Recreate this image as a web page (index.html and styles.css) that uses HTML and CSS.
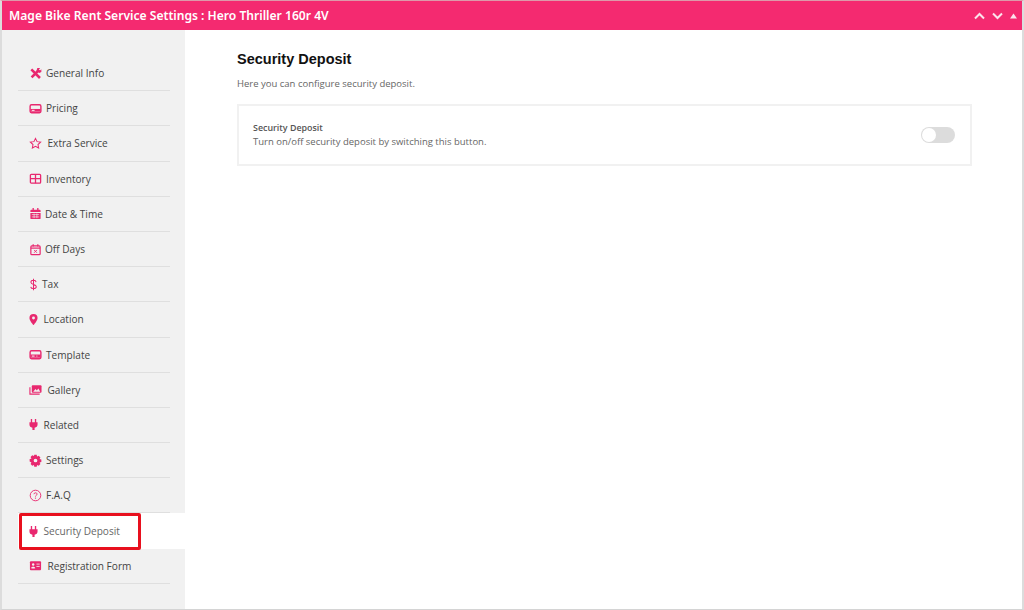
FILE: index.html
```html
<!DOCTYPE html>
<html lang="en">
<head>
  <meta charset="UTF-8" />
  <meta name="viewport" content="width=device-width, initial-scale=1.0" />
  <title>Mage Bike Rent Service Settings</title>
  <link rel="stylesheet" href="styles.css">
</head>
<body>
  <div class="panel">
    <header class="panel-head">
      <h1>Mage Bike Rent Service Settings : Hero Thriller 160r 4V</h1>
      <div class="head-controls">
        <svg width="11" height="8" viewBox="0 0 11 8"><path d="M1 6.500 5.500 2 10 6.500" fill="none" stroke="#fbe3ec" stroke-width="2"/></svg>
        <svg width="11" height="8" viewBox="0 0 11 8"><path d="M1 1.500 5.500 6 10 1.500" fill="none" stroke="#fbe3ec" stroke-width="2"/></svg>
        <svg width="7" height="6" viewBox="0 0 7 6"><path d="M3.500 0.500 7 5.500H0z" fill="#fbe3ec"/></svg>
      </div>
    </header>

    <div class="panel-body">
      <nav class="side">
        <ul>
          <li><a href="#">
            <svg class="ico" viewBox="0 0 14 14"><path d="M2.500 2.500 11.800 11.800M11 3 2.800 11.200" fill="none" stroke="#e8286f" stroke-width="2.800"/><path d="M9 1.200h3l-1.500 1.800 1 1 1.800-1.500v3L11 6.500 8 4z" fill="#e8286f"/></svg>
            General Info</a></li>
          <li><a href="#">
            <svg class="ico" viewBox="0 0 14 14"><rect x="1.200" y="3" width="11.600" height="8.500" rx="1.500" fill="none" stroke="#e8286f" stroke-width="1.500"/><path d="M1.500 7.500h11v3h-11z" fill="#e8286f"/><path d="M3 9h3" stroke="#fff" stroke-width="1"/></svg>
            Pricing</a></li>
          <li class="shift-2"><a href="#">
            <svg class="ico" viewBox="0 0 14 14"><path d="M7 1.500 8.700 5l3.800.5-2.800 2.600.7 3.800L7 10.100l-3.400 1.800.7-3.800L1.500 5.500 5.300 5z" fill="none" stroke="#e8286f" stroke-width="1.100"/></svg>
            Extra Service</a></li>
          <li><a href="#">
            <svg class="ico" viewBox="0 0 14 14"><rect x="1.500" y="2.500" width="11" height="9.500" rx="1" fill="none" stroke="#e8286f" stroke-width="1.400"/><path d="M7 2.500v9.500M1.500 7.200h11" stroke="#e8286f" stroke-width="1.400"/></svg>
            Inventory</a></li>
          <li class="shift-n1"><a href="#">
            <svg class="ico" viewBox="0 0 14 14"><path d="M2.500 3h9a1 1 0 0 1 1 1v1.500h-11V4a1 1 0 0 1 1-1zM1.500 6.500h11V12a1 1 0 0 1-1 1h-9a1 1 0 0 1-1-1z" fill="#e8286f"/><path d="M4.500 1v2.500M9.500 1v2.500" stroke="#e8286f" stroke-width="1.400"/><path d="M3 8.200h8M3 10.700h8M5.500 7v5M8.500 7v5" stroke="#f1f1f1" stroke-width=".7"/></svg>
            Date &amp; Time</a></li>
          <li class="shift-n1"><a href="#">
            <svg class="ico" viewBox="0 0 14 14"><rect x="2" y="3.200" width="10" height="9.300" rx="1" fill="none" stroke="#e8286f" stroke-width="1.300"/><path d="M2 5.500h10" stroke="#e8286f" stroke-width="1.300"/><path d="M4.500 1.300v2.500M9.500 1.300v2.500" stroke="#e8286f" stroke-width="1.300"/><path d="M5.500 7.500l3 3M8.500 7.500l-3 3" stroke="#e8286f" stroke-width="1"/></svg>
            Off Days</a></li>
          <li class="tax"><a href="#">
            <svg class="ico ico-narrow" viewBox="0 0 9 14"><path d="M7.300 4.400C7.100 3.200 6 2.500 4.500 2.500c-1.600 0-2.800.8-2.800 2.100 0 3 5.800 1.600 5.800 4.700 0 1.300-1.300 2.100-3 2.100-1.600 0-2.800-.7-3-1.900M4.500 .8v12.400" fill="none" stroke="#e8286f" stroke-width="1.100"/></svg>
            Tax</a></li>
          <li class="pin"><a href="#">
            <svg class="ico ico-narrow" viewBox="0 0 10 14"><path fill-rule="evenodd" d="M5 .8a4.500 4.500 0 0 1 4.500 4.500C9.500 8.500 5 13.200 5 13.200S.5 8.500.5 5.300A4.500 4.500 0 0 1 5 .8zm0 3a1.600 1.600 0 1 0 0 3.200 1.600 1.600 0 0 0 0-3.200z" fill="#e8286f"/></svg>
            Location</a></li>
          <li><a href="#">
            <svg class="ico" viewBox="0 0 14 14"><rect x="1.200" y="3" width="11.600" height="8.500" rx="1.500" fill="none" stroke="#e8286f" stroke-width="1.500"/><path d="M1.500 7h11v3.500h-11z" fill="#e8286f"/><path d="M3 8.700h3M8 8.700h1" stroke="#fff" stroke-width="1"/></svg>
            Template</a></li>
          <li class="shift-2"><a href="#">
            <svg class="ico" viewBox="0 0 14 14"><rect x="3" y="2.500" width="10.500" height="8" rx="1" fill="#e8286f"/><path d="M1 4.500v7.500h10.500" fill="none" stroke="#e8286f" stroke-width="1.200"/><path d="M4.500 9.500 7 6.500l1.500 1.500 1.500-2 2.200 3.500z" fill="#f1f1f1"/></svg>
            Gallery</a></li>
          <li class="pin"><a href="#">
            <svg class="ico ico-narrow" viewBox="0 0 10 14"><path d="M2 1h1.500v3.500h3V1H8v3.500h1.500V7c0 2-1.300 3.300-3.300 3.500V13H3.800v-2.500C1.800 10.300.5 9 .5 7V4.500H2z" fill="#e8286f"/></svg>
            Related</a></li>
          <li><a href="#">
            <svg class="ico" viewBox="0 0 14 14"><path fill-rule="evenodd" d="M5.700.8h2.600l.4 1.900 1.800-.8 1.800 1.900-.9 1.700 1.900.5v2.600l-1.900.5.900 1.700-1.800 1.900-1.800-.8-.4 1.900H5.700l-.4-1.900-1.800.8-1.800-1.900.9-1.700L.7 8.100V5.500l1.900-.5-.9-1.700 1.800-1.900 1.800.8zM7 5a2 2 0 1 0 0 4 2 2 0 0 0 0-4z" fill="#e8286f"/></svg>
            Settings</a></li>
          <li><a href="#">
            <svg class="ico" viewBox="0 0 14 14"><circle cx="7" cy="7" r="5.700" fill="none" stroke="#e8286f" stroke-width="1"/><path d="M5.300 5.600C5.400 4.600 6.100 4.100 7 4.100c1 0 1.700.6 1.700 1.400 0 1.300-1.700 1.300-1.700 2.600" fill="none" stroke="#e8286f" stroke-width="1"/><circle cx="7" cy="9.800" r=".7" fill="#e8286f"/></svg>
            F.A.Q</a></li>
          <li class="pin active"><a href="#">
            <svg class="ico ico-narrow" viewBox="0 0 10 14"><path d="M2 1h1.500v3.500h3V1H8v3.500h1.500V7c0 2-1.300 3.300-3.300 3.500V13H3.800v-2.500C1.800 10.300.5 9 .5 7V4.500H2z" fill="#e8286f"/></svg>
            Security Deposit</a>
            <span class="mark"></span></li>
          <li class="shift-2"><a href="#">
            <svg class="ico" viewBox="0 0 14 14"><rect x="1" y="2.500" width="12" height="9.500" rx="1" fill="#e8286f"/><circle cx="4.500" cy="6" r="1.300" fill="#f1f1f1"/><path d="M2.700 9.800c.2-1.500 3.400-1.500 3.600 0zM8 5.500h3.500M8 8h3.500" stroke="#f1f1f1" stroke-width=".9" fill="#f1f1f1"/></svg>
            Registration Form</a></li>
        </ul>
      </nav>

      <main class="content">
        <h2>Security Deposit</h2>
        <p class="intro">Here you can configure security deposit.</p>
        <section class="option">
          <div class="option-text">
            <strong>Security Deposit</strong>
            <span>Turn on/off security deposit by switching this button.</span>
          </div>
          <span class="switch"><span class="knob"></span></span>
        </section>
      </main>
    </div>
  </div>
</body>
</html>
```

FILE: styles.css
```css
* {
  box-sizing: border-box;
}

html,
body {
  height: 100%;
}

body {
  margin: 0;
  background: #fff;
  font-family: "Open Sans", "Noto Sans", sans-serif;
  color: #444;
  overflow: hidden;
}

.panel {
  display: flex;
  flex-direction: column;
  height: 610px;
  border: 1px solid #d4d4d4;
  border-left: 2px solid #dcdcdc;
  border-right: 2px solid #dcdcdc;
  border-top-color: #d9a;
}

.panel-head {
  display: flex;
  align-items: center;
  justify-content: space-between;
  height: 29px;
  padding: 0 5px 0 7px;
  background: #f42a70;
  color: #fff;
}

.panel-head h1 {
  margin: 0;
  font-family: "Noto Sans", sans-serif;
  font-size: 12.100px;
  font-weight: 600;
}

.head-controls {
  display: flex;
  align-items: center;
  gap: 7px;
}

.panel-body {
  display: flex;
  flex: 1;
  min-height: 0;
}

.side {
  width: 183px;
  padding: 26px 0 0 16px;
  background: #f1f1f1;
}

.side ul {
  margin: 0;
  padding: 0;
  list-style: none;
}

.side li {
  position: relative;
  width: 152px;
  height: 35.200px;
  border-bottom: 1px solid #dfdfdf;
}

.side li a {
  display: flex;
  align-items: center;
  gap: 4.500px;
  height: 100%;
  padding-left: 10.500px;
  font-size: 10.100px;
  color: #444;
  text-decoration: none;
}

.ico {
  width: 13px;
  height: 13px;
  flex: none;
}

.ico-narrow {
  width: 9px;
}

.side li.shift-2 a {
  gap: 6px;
}

.side li.shift-n1 a {
  gap: 3.500px;
}

.side li.tax a {
  gap: 4.500px;
}

.side li.pin a {
  gap: 6px;
}

.side li.active {
  width: 167px;
  background: #fff;
  border-bottom: 0;
}

.side li.active a {
  color: #666;
}

.mark {
  position: absolute;
  left: 1px;
  top: 0;
  width: 122px;
  height: 37px;
  border: 3px solid #e8101e;
  border-radius: 2px;
}

.content {
  flex: 1;
  padding: 21px 50px 0 52px;
}

.content h2 {
  margin: 0;
  font-family: "Liberation Sans", Arial, sans-serif;
  font-size: 14.500px;
  font-weight: 700;
  color: #111;
  line-height: 17px;
}

.intro {
  margin: 9px 0 0;
  font-size: 9.500px;
  line-height: 14px;
  color: #666;
}

.option {
  display: flex;
  align-items: center;
  justify-content: space-between;
  height: 62px;
  margin-top: 13px;
  padding: 0 15px 0 14px;
  border: 2px solid #f1f1f1;
}

.option-text {
  display: flex;
  flex-direction: column;
  font-size: 9.500px;
  line-height: 14px;
  color: #666;
}

.option-text strong {
  font-size: 8.900px;
  font-weight: 600;
  color: #555;
}

.switch {
  display: block;
  width: 34px;
  height: 16px;
  padding: 1px;
  border-radius: 8px;
  background: #dcdcdc;
}

.knob {
  display: block;
  width: 14px;
  height: 14px;
  border-radius: 50%;
  background: #fff;
}
```
